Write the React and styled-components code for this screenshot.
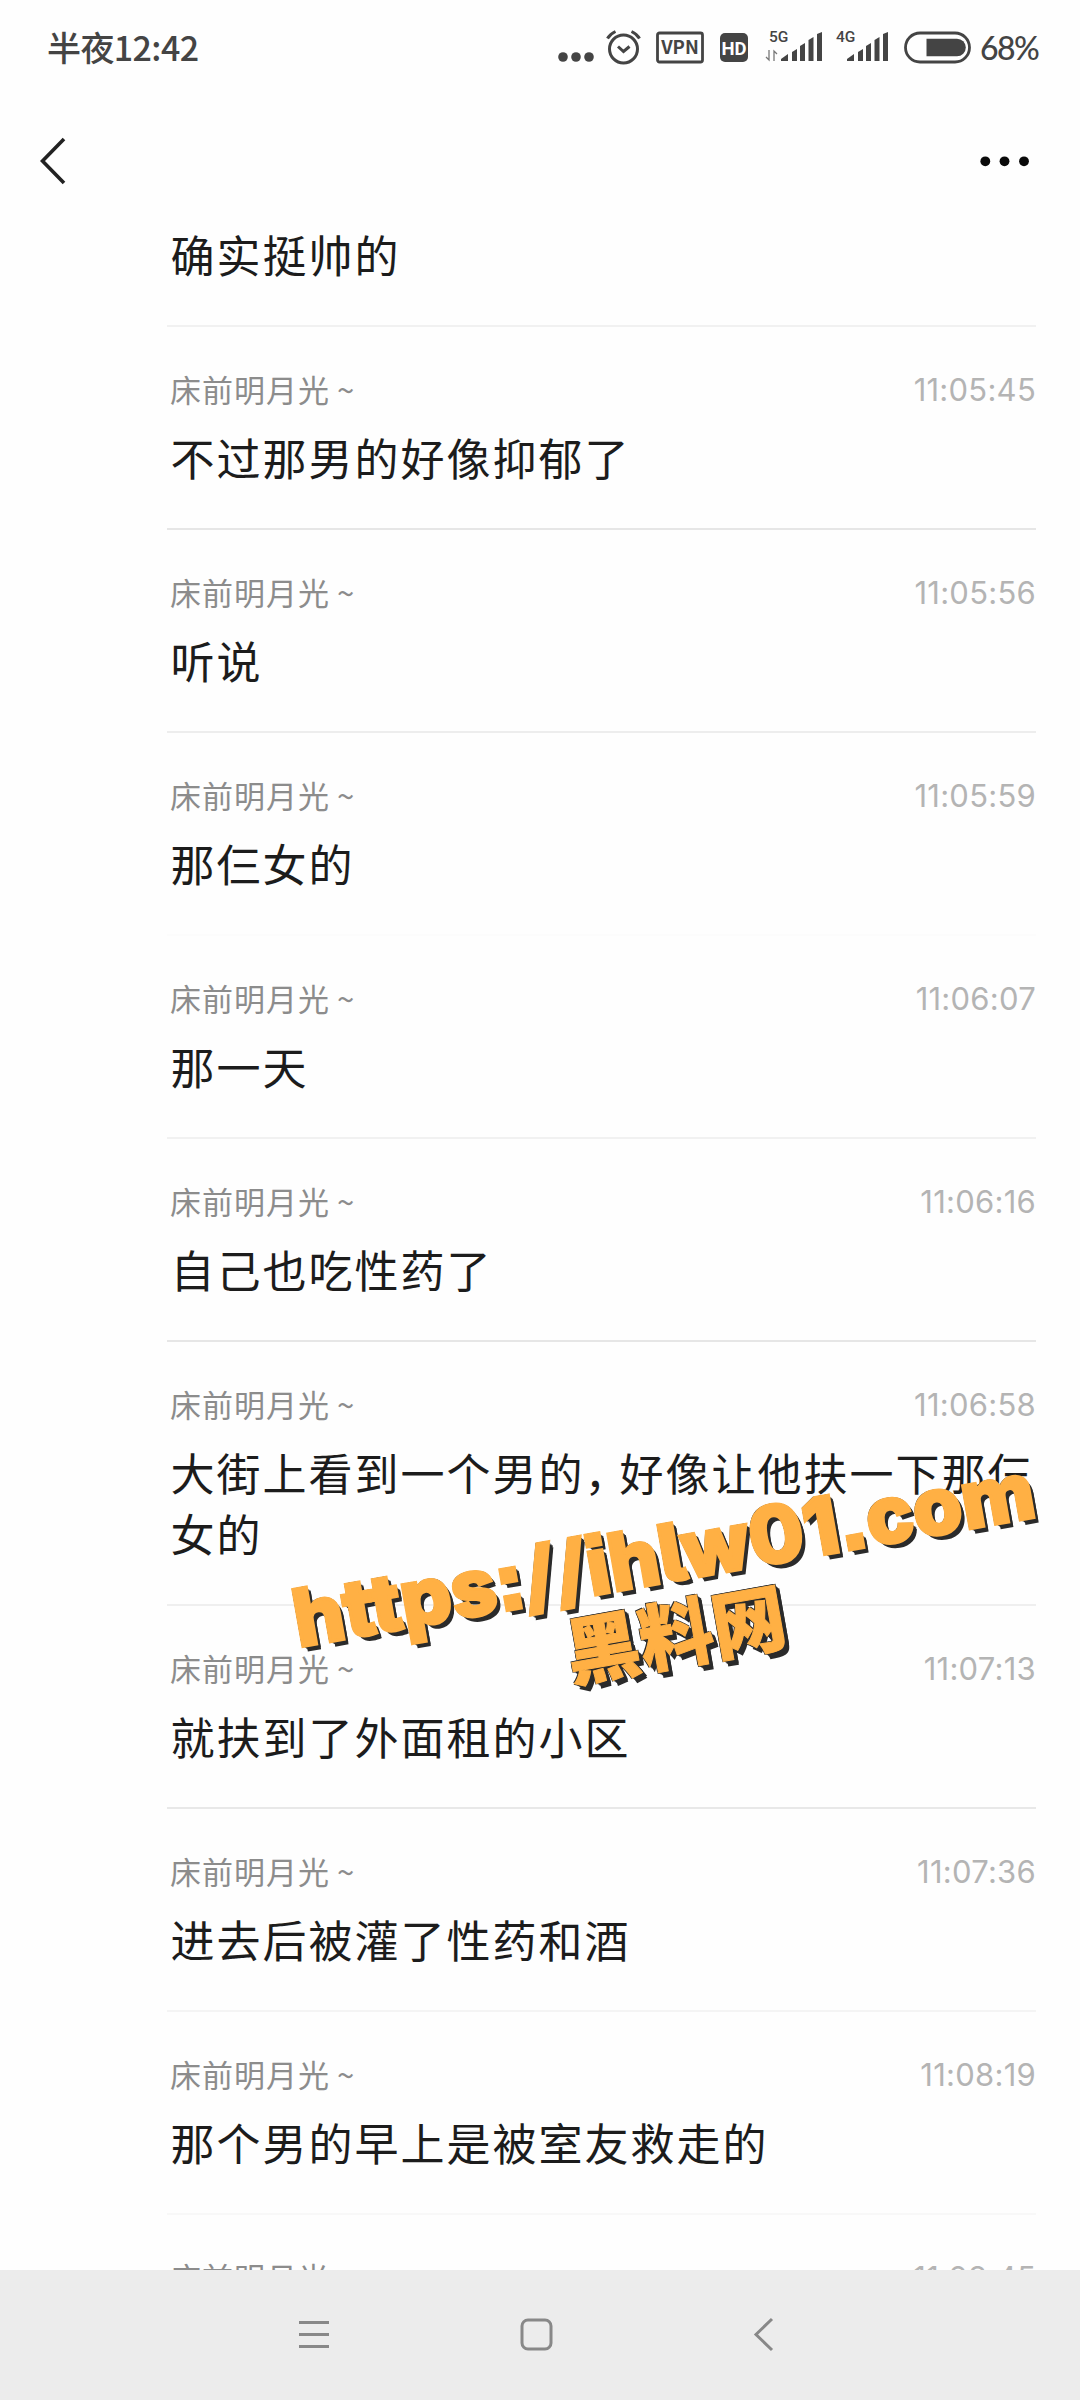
import styled, { createGlobalStyle } from "styled-components";

const GlobalStyle = createGlobalStyle`
  * {
    box-sizing: border-box;
  }
  body {
    margin: 0;
    background: #fefefe;
  }
`;

const Screen = styled.div`
  position: relative;
  width: 1080px;
  height: 2400px;
  display: flex;
  flex-direction: column;
  overflow: hidden;
  background: #fefefe;
  font-family: "Noto Sans CJK SC", "Noto Sans", sans-serif;
`;

const StatusBar = styled.header`
  height: 98px;
  flex: none;
  display: flex;
  justify-content: space-between;
  align-items: flex-start;
  padding: 24px 42px 0 47px;
  color: #444;
`;

const Clock = styled.div`
  font-size: 34px;
  font-weight: 500;
  line-height: 46px;
  letter-spacing: -0.6px;
`;

const StatusIcons = styled.div`
  display: flex;
  height: 46px;
`;

const StatusIcon = styled.svg`
  display: block;
  height: 46px;
  width: ${(props) => props.$width}px;
  margin-right: ${(props) => props.$gap}px;
  overflow: visible;
  fill: #444;
`;

const Battery = styled.div`
  width: 58px;
  font-family: Lato, sans-serif;
  font-size: 32px;
  font-weight: 500;
  line-height: 47px;
  letter-spacing: -1.6px;
  white-space: nowrap;
`;

const TitleBar = styled.div`
  height: 126px;
  flex: none;
  display: flex;
  justify-content: space-between;
  align-items: flex-start;
  padding: 37px 51px 0 40px;
`;

const List = styled.main`
  height: 2046px;
  flex: none;
  overflow: hidden;
  padding: 0 44px 0 167px;
`;

const MessageRow = styled.article`
  padding: ${(props) => (props.$first ? 0 : 44)}px 0 40px 3px;
  border-bottom: 2px solid ${(props) => props.$line};
`;

const MessageHead = styled.div`
  height: 36px;
  margin-bottom: 20px;
  display: flex;
  justify-content: space-between;
  line-height: 36px;
`;

const Sender = styled.span`
  font-size: 31px;
  font-weight: 400;
  letter-spacing: 1px;
  word-spacing: -1px;
  color: #8c8c8c;
`;

const Time = styled.time`
  font-family: Inter, sans-serif;
  font-size: 31px;
  font-weight: 400;
  line-height: 38px;
  letter-spacing: 0.25px;
  color: #b4b4b4;
`;

const MessageText = styled.p`
  margin: 0;
  padding-left: 0.5px;
  font-size: 44px;
  line-height: 61px;
  letter-spacing: 2px;
  white-space: nowrap;
  color: #1c1c1c;
`;

const Comma = styled.span`
  letter-spacing: -9px;
`;

const NavBar = styled.footer`
  height: 130px;
  flex: none;
  display: flex;
  align-items: flex-start;
  gap: 190px;
  padding: 46px 0 0 297px;
  background: #ececec;
`;

const NavIcon = styled.svg`
  display: block;
  width: 36px;
  height: 36px;
  overflow: visible;
  fill: none;
  stroke: #888;
  stroke-width: 3;
`;

const Watermark = styled.div`
  position: absolute;
  left: 268px;
  top: 1508px;
  width: 800px;
  display: flex;
  flex-direction: column;
  align-items: center;
  transform: rotate(-10deg);
  font-size: 74px;
  font-weight: 900;
  line-height: 82px;
  white-space: nowrap;
  color: #ffb044;
  text-shadow: -1.2px -1.2px 0 #2b2b2b, 1px -1px 0 #2b2b2b,
    -1px 1px 0 #2b2b2b, 1px 1px 0 #2b2b2b, 2px 2px 0 #2b2b2b,
    3px 3px 0 #2b2b2b, 4px 4px 0 #2b2b2b, 4px 6px 0 #2b2b2b;
`;

const SiteUrl = styled.span`
  padding: 4px 0 0 4px;
  margin-bottom: -4px;
  font-family: Inter, sans-serif;
  font-size: 79px;
  font-weight: 800;
  font-feature-settings: "cv05" 1, "ss07" 1, "calt" 0;
  letter-spacing: 0.4px;
  -webkit-text-stroke: 3.5px #ffb044;
`;

const SiteName = styled.span`
  -webkit-text-stroke: 1px #ffb044;
`;

const SENDER = "床前明月光 ~";

const messages = [
  { text: ["确实挺帅的"], line: "#f1f1f1" },
  { time: "11:05:45", text: ["不过那男的好像抑郁了"], line: "#e6e6e6" },
  { time: "11:05:56", text: ["听说"], line: "#ededed" },
  { time: "11:05:59", text: ["那仨女的"], line: "#fcfcfc" },
  { time: "11:06:07", text: ["那一天"], line: "#f1f1f1" },
  { time: "11:06:16", text: ["自己也吃性药了"], line: "#e6e6e6" },
  {
    time: "11:06:58",
    text: ["大街上看到一个男的，好像让他扶一下那仨", "女的"],
    line: "#efefef",
  },
  { time: "11:07:13", text: ["就扶到了外面租的小区"], line: "#e8e8e8" },
  { time: "11:07:36", text: ["进去后被灌了性药和酒"], line: "#f4f4f4" },
  { time: "11:08:19", text: ["那个男的早上是被室友救走的"], line: "#f8f8f8" },
  { time: "11:08:45", text: [""], line: "#f1f1f1" },
];

const SignalIcon = ({ label, width, gap, arrows }) => {
  const left = width - 41;
  return (
    <StatusIcon $width={width} $gap={gap} viewBox={`0 0 ${width} 46`}>
      <text
        x={arrows ? 4 : 0}
        y="18"
        fontSize="15.5"
        fontWeight="500"
        fontFamily="Roboto"
      >
        {label}
      </text>
      {arrows && (
        <path
          d="M4 26v10l-3-3M9 37v-10l3 3"
          fill="none"
          stroke="#777"
          strokeWidth="1.3"
        />
      )}
      <path d={`M${left} 37v-2l7-5v7z`} />
      <path d={`M${left + 11} 37v-9l5-3v12z`} />
      <path d={`M${left + 19} 37v-15l5-3v18z`} />
      <path d={`M${left + 27.5} 37v-21l5-3v24z`} />
      <path d={`M${left + 36} 37v-27l5-2v29z`} />
    </StatusIcon>
  );
};

const PhoneStatus = () => (
  <StatusBar>
    <Clock>半夜12:42</Clock>
    <StatusIcons>
      <StatusIcon $width={36} $gap={12} viewBox="0 0 36 46">
        <circle cx="5" cy="33" r="4.8" />
        <circle cx="18" cy="33" r="4.8" />
        <circle cx="31" cy="33" r="4.8" />
      </StatusIcon>
      <StatusIcon $width={35} $gap={15} viewBox="0 0 35 46">
        <g fill="none" stroke="#444" strokeWidth="3">
          <circle cx="17.5" cy="25" r="14" />
          <path d="M12 22.5l5.5 5 6-5M1.5 14.5Q4 10 9.5 7.5M33.5 14.5Q31 10 25.5 7.5" />
        </g>
      </StatusIcon>
      <StatusIcon $width={48} $gap={16} viewBox="0 0 48 46">
        <rect
          x="1.5"
          y="9"
          width="45"
          height="29"
          rx="2"
          fill="none"
          stroke="#444"
          strokeWidth="2.8"
        />
        <text
          x="24"
          y="30"
          textAnchor="middle"
          fontSize="18.5"
          fontWeight="700"
          fontFamily="Noto Sans CJK SC"
        >
          VPN
        </text>
      </StatusIcon>
      <StatusIcon $width={28} $gap={17} viewBox="0 0 28 46">
        <rect x="0" y="9" width="28" height="29" rx="5" />
        <text
          x="14"
          y="30.5"
          textAnchor="middle"
          fontSize="18.5"
          fontWeight="700"
          fontFamily="Roboto"
          fill="#fff"
        >
          HD
        </text>
      </StatusIcon>
      <SignalIcon label="5G" width={57} gap={14} arrows />
      <SignalIcon label="4G" width={52} gap={16} />
      <StatusIcon $width={67} $gap={9} viewBox="0 0 67 46">
        <rect
          x="1.5"
          y="9"
          width="64"
          height="29"
          rx="14.5"
          fill="none"
          stroke="#444"
          strokeWidth="2.8"
        />
        <path d="M22.5 14.7H53a8.8 8.8 0 0 1 0 17.6H22.5z" />
      </StatusIcon>
      <Battery>68%</Battery>
    </StatusIcons>
  </StatusBar>
);

const ChatTitle = () => (
  <TitleBar>
    <svg width="28" height="52" fill="none" stroke="#222" strokeWidth="3.6">
      <path d="M24 4L2.5 26L24 48" />
    </svg>
    <svg width="50" height="52" fill="#0a0a0a">
      <circle cx="6.3" cy="26.3" r="4.9" />
      <circle cx="25.5" cy="26.3" r="4.9" />
      <circle cx="45" cy="26.3" r="4.9" />
    </svg>
  </TitleBar>
);

const Line = ({ children }) => {
  const [before, after] = children.split("，");
  return (
    <MessageText>
      {before}
      {after && (
        <>
          <Comma>，</Comma>
          {after}
        </>
      )}
    </MessageText>
  );
};

const Message = ({ message }) => (
  <MessageRow $first={!message.time} $line={message.line}>
    {message.time && (
      <MessageHead>
        <Sender>{SENDER}</Sender>
        <Time>{message.time}</Time>
      </MessageHead>
    )}
    {message.text.map((line) => (
      <Line key={line}>{line}</Line>
    ))}
  </MessageRow>
);

const SystemNav = () => (
  <NavBar>
    <NavIcon viewBox="0 0 36 36">
      <path d="M2 6.5H32M2 18.5H32M2 30.5H32" />
    </NavIcon>
    <NavIcon viewBox="0 0 36 36">
      <rect x="-1" y="4" width="29" height="29" rx="6" />
    </NavIcon>
    <NavIcon viewBox="0 0 36 36">
      <path d="M23 3L7 18.5L23 34" />
    </NavIcon>
  </NavBar>
);

export default function App() {
  return (
    <>
      <GlobalStyle />
      <Screen>
        <PhoneStatus />
        <ChatTitle />
        <List>
          {messages.map((message, index) => (
            <Message key={index} message={message} />
          ))}
        </List>
        <SystemNav />
        <Watermark>
          <SiteUrl>https://ihlw01.com</SiteUrl>
          <SiteName>黑料网</SiteName>
        </Watermark>
      </Screen>
    </>
  );
}
